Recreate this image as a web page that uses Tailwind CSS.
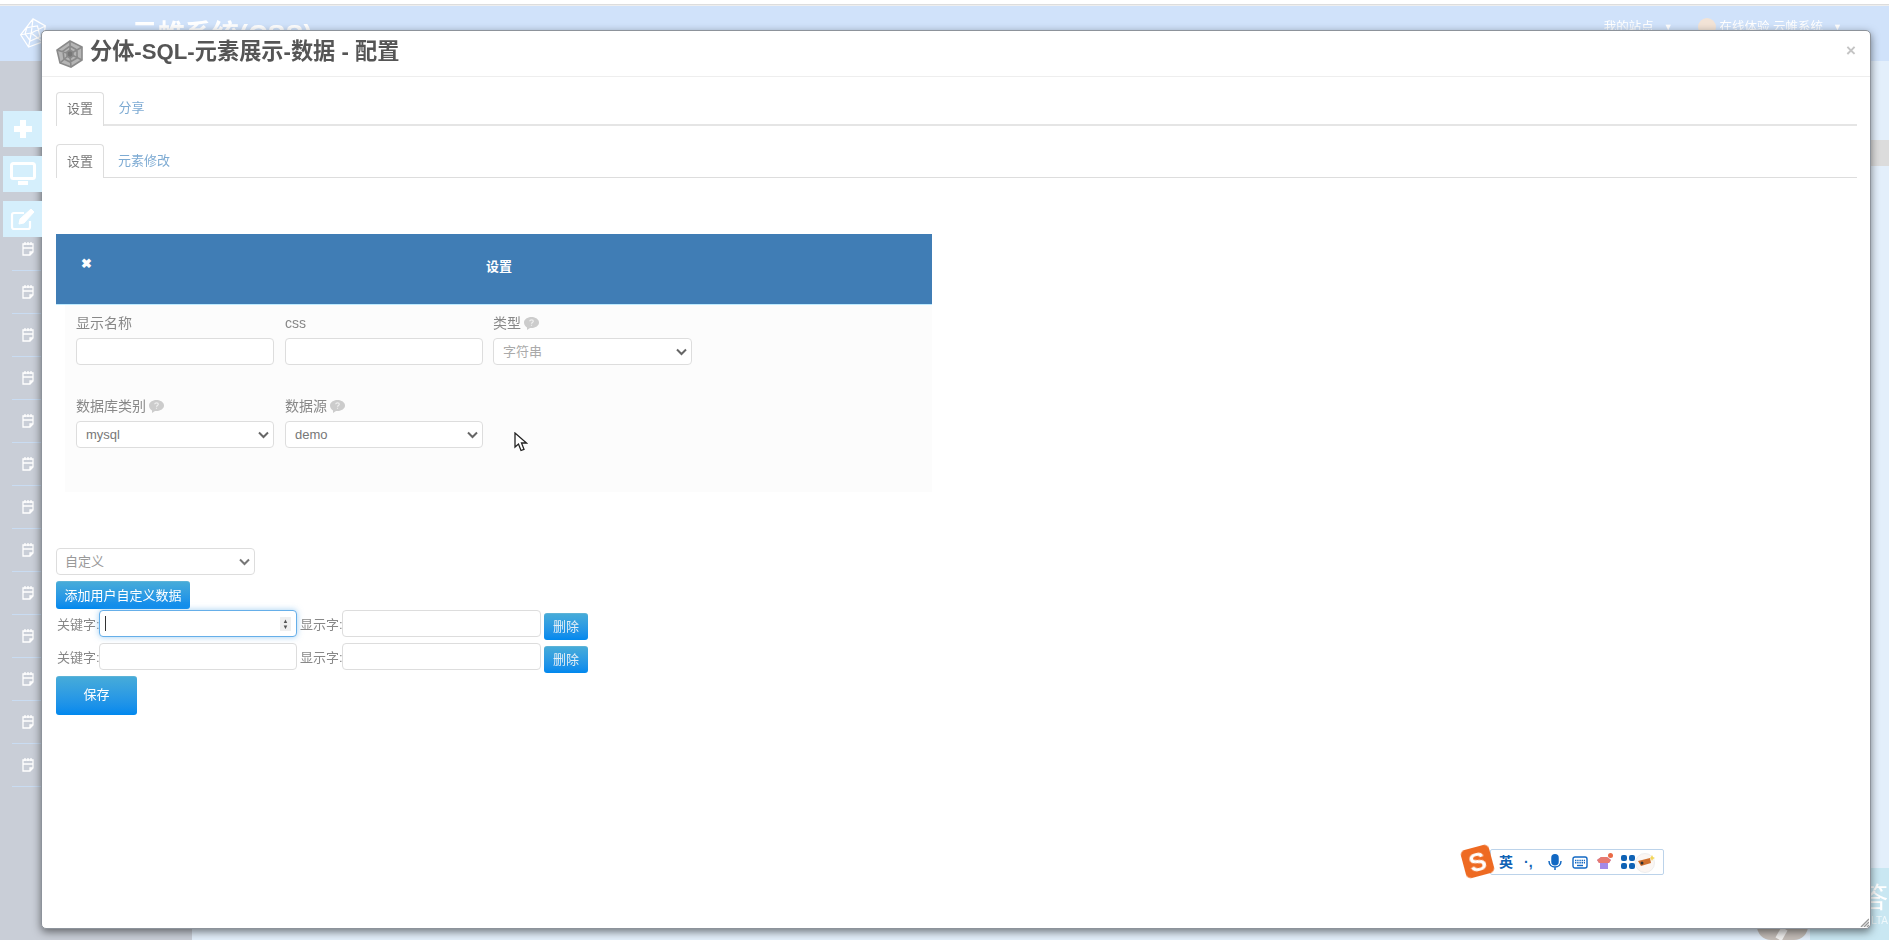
<!DOCTYPE html>
<html lang="zh">
  <head>
    <meta charset="UTF-8" />
    <title>分体-SQL-元素展示-数据 - 配置</title>
    <script src="https://cdn.jsdelivr.net/npm/@tailwindcss/browser@4"></script>
  </head>
  <body class="relative h-[940px] w-[1889px] overflow-hidden bg-white font-['Liberation_Sans','Noto_Sans_CJK_SC',sans-serif] text-[#777]">
    <div class="relative h-full w-full blur-[0.5px]">
      <!-- page behind the dialog -->
      <div class="h-[5px] border-b border-[#ddd] bg-white"></div>
      <header class="flex h-[56px] items-start border-t border-[#eee] bg-[#d0e2fa] text-white">
        <div class="w-[131px] pl-[18px] pt-[10px]">
          <svg width="30" height="34" viewBox="0 0 34 36" fill="none" stroke="#fff" stroke-width="1.4"><path d="M17 2 31 10 28 28 12 34 3 20Z M17 2 15 18 31 10 M15 18 28 28 M15 18 12 34 M15 18 3 20 M10 12 22 10 25 22 14 27 8 19Z" /></svg>
        </div>
        <div class="pt-[16px] text-[27px] font-bold leading-none">云帷系统(CSS)</div>
        <div class="ml-auto flex items-center pr-[47px] pt-[12px] text-[12.5px]">
          <span>我的站点</span><span class="ml-[10px] mr-[25px] text-[9px]">▼</span>
          <span class="mr-[4px] size-[18px] rounded-full bg-[#f2e3d6]"></span>
          <span>在线体验 云帷系统</span><span class="ml-[10px] text-[9px]">▼</span>
        </div>
      </header>

      <div class="flex h-[879px]">
        <aside class="w-[192px] bg-[#c9ced7]">
          <div class="relative z-10 flex flex-col gap-[9px] pl-[3px] pt-[50px]">
            <div class="flex h-[36px] w-[39px] items-center justify-center bg-[#d5effc]">
              <svg width="20" height="20" viewBox="0 0 20 20" fill="#fff"><path d="M7 1h6v6h6v6h-6v6H7v-6H1V7h6z" /></svg>
            </div>
            <div class="flex h-[36px] w-[39px] items-center justify-center bg-[#d5effc]">
              <svg width="26" height="24" viewBox="0 0 26 24" fill="none"><rect x="1.500" y="1.500" width="23" height="15" rx="2" stroke="#fff" stroke-width="3" /><path d="M8 21h10" stroke="#fff" stroke-width="4" /></svg>
            </div>
            <div class="flex h-[36px] w-[39px] items-center justify-center bg-[#d5effc]">
              <svg width="26" height="24" viewBox="0 0 26 24" fill="none" stroke="#fff" stroke-width="2.200"><path d="M20 14v6a2 2 0 0 1-2 2H4a2 2 0 0 1-2-2V8a2 2 0 0 1 2-2h10" /><path d="M9 17l1-5L21 2l3 3-10 11z" fill="#fff" stroke-width="1" /></svg>
            </div>
          </div>
          <div id="side-list" class="-mt-[9px] pl-[12px]"></div>
        </aside>
        <main class="flex-1 bg-[#e3effb]"></main>
      </div>
      <div class="absolute right-0 top-[140px] h-[26px] w-[18px] bg-[#dcdcdc]"></div>

      <!-- chat widget in the corner, mostly under the dialog -->
      <div class="absolute left-[1810px] top-[868px] flex h-[72px] w-[79px] flex-col items-end overflow-hidden bg-[#c9e7f2] pr-[1px] pt-[17px] text-white">
        <span class="text-[28px] leading-none">答</span>
        <span class="mt-[3px] text-[10px] leading-none text-white/70">ONSULTA</span>
      </div>
      <div class="absolute left-[1757px] top-[920px] h-[20px] w-[51px] rounded-b-[14px] bg-[#c4bdb8]">
        <div class="ml-[21px] mt-[8px] h-[12px] w-[7px] rotate-[30deg] bg-white/80"></div>
      </div>

      <!-- dialog -->
      <div class="absolute left-[41px] top-[30px] flex h-[899px] w-[1830px] flex-col rounded-[5px] border border-[#8d939b] bg-white shadow-[0_3px_9px_rgba(0,0,0,0.5)]">
        <div class="flex h-[46px] shrink-0 items-center border-b border-[#eee] pl-[13px] pr-[14px]">
          <svg width="30" height="30" viewBox="0 0 30 30" fill="none" stroke="#8a8a8a" stroke-width="1.6"><path d="M15 2 27 8 27 21 16 28 5 24 2 11Z" fill="#b5b5b5" /><path d="M15 7 22 11 22 19 15 23 9 20 8 12Z M15 15 15 2 M15 15 27 8 M15 15 27 21 M15 15 16 28 M15 15 5 24 M15 15 2 11" /><path d="M15 11 18 13 18 17 15 19 12 17 12 13Z" fill="#777" /></svg>
          <h4 class="ml-[5px] mt-[-2px] text-[22.2px] font-bold leading-none text-[#555]">分体-SQL-元素展示-数据 - 配置</h4>
          <span class="ml-auto mt-[-6px] text-[17px] font-bold leading-none text-[#c4c4c4]">×</span>
        </div>

        <div class="flex min-h-0 flex-1 flex-col pl-[14px] pr-[13px] pt-[15px]">
          <div class="flex h-[34px] shrink-0 border-b-2 border-[#e5e5e5] text-[13px]">
            <span class="-mb-[2px] flex h-[34px] w-[48px] items-center justify-center rounded-t-[4px] border border-b-0 border-[#ddd] bg-white pb-[2px] text-[#777]">设置</span>
            <span class="flex h-[32px] w-[55px] items-center justify-center text-[#7eabd3]">分享</span>
          </div>
          <div class="mt-[18px] flex h-[34px] shrink-0 border-b border-[#ddd] text-[13px]">
            <span class="-mb-[1px] flex h-[34px] w-[48px] items-center justify-center rounded-t-[4px] border border-b-0 border-[#ddd] bg-white text-[#777]">设置</span>
            <span class="flex h-[33px] w-[80px] items-center justify-center text-[#7eabd3]">元素修改</span>
          </div>

          <section class="mt-[56px] w-[876px] shrink-0">
            <div class="relative flex h-[71px] items-center justify-center border-b border-[#bdeaff] bg-[#407db5] pb-[4px] pl-[10px] text-[13px] font-bold text-white">
              <span class="absolute left-[25px] top-[23px] text-[13px] font-bold leading-none">✖</span>
              设置
            </div>
            <div class="ml-[9px] h-[187px] bg-[#fcfcfc] pl-[11px] pt-[8px] text-[#888]">
              <div class="flex gap-[10px]">
                <label class="mr-[1px] flex w-[198px] flex-col">
                  <span class="flex h-[25px] items-center pb-[4px] text-[14px]">显示名称</span>
                  <input class="h-[27px] rounded-[4px] border border-[#ddd] bg-white" />
                </label>
                <label class="flex w-[198px] flex-col">
                  <span class="flex h-[25px] items-center pb-[4px] text-[14px]">css</span>
                  <input class="h-[27px] rounded-[4px] border border-[#ddd] bg-white" />
                </label>
                <label class="flex w-[199px] flex-col">
                  <span class="flex h-[25px] items-center gap-[3px] pb-[4px] text-[14px]">类型
                    <svg width="15" height="13" viewBox="0 0 15 13"><path d="M7.500 0C11.600 0 15 2.400 15 5.500S11.600 11 7.500 11H6L3 13V10.400C1.200 9.400 0 7.600 0 5.500 0 2.400 3.400 0 7.500 0Z" fill="#ccc" /><path d="M5.700 4.200C5.900 2.500 9.300 2.500 9.300 4.300 9.300 5.500 7.500 5.500 7.500 6.800M7.500 7.800V8.800" fill="none" stroke="#eee" stroke-width="1.200" /></svg>
                  </span>
                  <span class="flex h-[27px] items-center justify-between rounded-[4px] border border-[#ddd] bg-white pl-[9px] pr-[4px] text-[13px] text-[#aaa]">字符串
                    <svg width="11" height="8" viewBox="0 0 11 8" fill="none" stroke="#666" stroke-width="2"><path d="M1 1.500 5.500 6 10 1.500" /></svg>
                  </span>
                </label>
              </div>
              <div class="mt-[31px] flex gap-[11px]">
                <label class="flex w-[198px] flex-col">
                  <span class="flex h-[25px] items-center gap-[3px] pb-[5px] text-[14px]">数据库类别
                    <svg width="15" height="13" viewBox="0 0 15 13"><path d="M7.500 0C11.600 0 15 2.400 15 5.500S11.600 11 7.500 11H6L3 13V10.400C1.200 9.400 0 7.600 0 5.500 0 2.400 3.400 0 7.500 0Z" fill="#ccc" /><path d="M5.700 4.200C5.900 2.500 9.300 2.500 9.300 4.300 9.300 5.500 7.500 5.500 7.500 6.800M7.500 7.800V8.800" fill="none" stroke="#eee" stroke-width="1.200" /></svg>
                  </span>
                  <span class="flex h-[27px] items-center justify-between rounded-[4px] border border-[#ddd] bg-white pl-[9px] pr-[4px] text-[13px] text-[#777]">mysql
                    <svg width="11" height="8" viewBox="0 0 11 8" fill="none" stroke="#666" stroke-width="2"><path d="M1 1.500 5.500 6 10 1.500" /></svg>
                  </span>
                </label>
                <label class="flex w-[198px] flex-col">
                  <span class="flex h-[25px] items-center gap-[3px] pb-[5px] text-[14px]">数据源
                    <svg width="15" height="13" viewBox="0 0 15 13"><path d="M7.500 0C11.600 0 15 2.400 15 5.500S11.600 11 7.500 11H6L3 13V10.400C1.200 9.400 0 7.600 0 5.500 0 2.400 3.400 0 7.500 0Z" fill="#ccc" /><path d="M5.700 4.200C5.900 2.500 9.300 2.500 9.300 4.300 9.300 5.500 7.500 5.500 7.500 6.800M7.500 7.800V8.800" fill="none" stroke="#eee" stroke-width="1.200" /></svg>
                  </span>
                  <span class="flex h-[27px] items-center justify-between rounded-[4px] border border-[#ddd] bg-white pl-[9px] pr-[4px] text-[13px] text-[#777]">demo
                    <svg width="11" height="8" viewBox="0 0 11 8" fill="none" stroke="#666" stroke-width="2"><path d="M1 1.500 5.500 6 10 1.500" /></svg>
                  </span>
                </label>
              </div>
            </div>
          </section>

          <div class="mt-[56px] flex h-[27px] w-[199px] shrink-0 items-center justify-between rounded-[4px] border border-[#ddd] bg-white pl-[8px] pr-[4px] text-[13px] text-[#999]">自定义
            <svg width="11" height="8" viewBox="0 0 11 8" fill="none" stroke="#777" stroke-width="2"><path d="M1 1.500 5.500 6 10 1.500" /></svg>
          </div>
          <button class="mt-[6px] h-[28px] w-[134px] shrink-0 rounded-[3px] border-t border-[#5cb3d8] bg-linear-to-b from-[#46abd9] to-[#0088ee] text-[13px] text-white">添加用户自定义数据</button>
          <div class="flex h-[33px] shrink-0 items-start text-[13px]">
            <span class="w-[43px] whitespace-nowrap pl-[1px] pt-[6px] text-[#888]">关键字:</span>
            <span class="mt-[1px] flex h-[27px] w-[198px] items-center justify-between rounded-[4px] border border-[#66afe9] bg-white pl-[5px] pr-[5px] shadow-[0_0_6px_rgba(102,175,233,0.6)]">
              <span class="h-[15px] w-px bg-[#333]"></span>
              <span class="flex h-[14px] w-[11px] flex-col items-center justify-center bg-[#efefef] text-[6px] leading-[6px] text-[#555]"><span>▲</span><span>▼</span></span>
            </span>
            <span class="w-[45px] whitespace-nowrap pl-[3px] pt-[6px] text-[#888]">显示字:</span>
            <input class="mt-[1px] h-[27px] w-[199px] rounded-[4px] border border-[#ddd] bg-white" />
            <button class="ml-[3px] mt-[4px] h-[27px] w-[44px] rounded-[3px] border-t border-[#5cb3d8] bg-linear-to-b from-[#46abd9] to-[#0088ee] text-[13px] text-[#e4eef6]">删除</button>
          </div>
          <div class="flex h-[33px] shrink-0 items-start text-[13px]">
            <span class="w-[43px] whitespace-nowrap pl-[1px] pt-[6px] text-[#888]">关键字:</span>
            <input class="mt-[1px] h-[27px] w-[198px] rounded-[4px] border border-[#ddd] bg-white" />
            <span class="w-[45px] whitespace-nowrap pl-[3px] pt-[6px] text-[#888]">显示字:</span>
            <input class="mt-[1px] h-[27px] w-[199px] rounded-[4px] border border-[#ddd] bg-white" />
            <button class="ml-[3px] mt-[4px] h-[27px] w-[44px] rounded-[3px] border-t border-[#5cb3d8] bg-linear-to-b from-[#46abd9] to-[#0088ee] text-[13px] text-[#e4eef6]">删除</button>
          </div>
          <button class="mt-[1px] h-[39px] w-[81px] shrink-0 rounded-[3px] border-t border-[#5cb3d8] bg-linear-to-b from-[#46abd9] to-[#0088ee] pb-[2px] text-[13px] text-white">保存</button>
        </div>
        <svg class="absolute bottom-[1px] right-[1px]" width="9" height="9" viewBox="0 0 9 9" stroke="#999" stroke-width="1.400"><path d="M9 1 1 9 M9 4 4 9 M9 7 7 9" /></svg>
      </div>

      <!-- mouse pointer -->
      <svg class="absolute left-[514px] top-[432px]" width="14" height="20" viewBox="0 0 14 20" fill="#fff" stroke="#222" stroke-width="1.300"><path d="M1 1V15L4.500 12L7 18.500L10 17.300L7.500 11H12.500Z" /></svg>

      <!-- input method toolbar -->
      <div class="absolute left-[1490px] top-[849px] flex h-[26px] w-[174px] items-center gap-[7px] rounded-[2px] border border-[#bcd3ea] bg-white pl-[8px] text-[#0f62b5]">
        <span class="text-[14px] font-bold leading-none">英</span>
        <span class="ml-[4px] w-[17px] text-[14px] font-bold leading-none">·,</span>
        <svg width="14" height="17" viewBox="0 0 14 17" fill="none" stroke="#1268c3" stroke-width="1.500"><rect x="4" y="0.800" width="6" height="10" rx="3" fill="#1268c3" /><path d="M1 7c0 8 12 8 12 0 M7 13v3" /></svg>
        <svg class="ml-[3px]" width="16" height="13" viewBox="0 0 16 13" fill="none" stroke="#1268c3"><rect x="1" y="1" width="14" height="11" rx="2" stroke-width="1.400" /><path d="M3 4.500h10 M3 6.800h10" stroke-width="1.400" stroke-dasharray="1.400 0.800" /><path d="M5 9.500h6" stroke-width="1.400" /></svg>
        <svg class="ml-[1px]" width="18" height="18" viewBox="0 0 18 18"><path d="M1 7 5 4h6l4 3-2 3-1-.500V16H4V9.500L3 10Z" fill="#a48ae8" /><path d="M1 7 5 4h6l4 3-2 3H3Z" fill="#e87a70" /><circle cx="14.500" cy="2.500" r="2.500" fill="#ea6a45" /></svg>
        <svg width="14" height="14" viewBox="0 0 14 14" fill="#0f62b5"><rect width="6" height="6" rx="2" /><rect x="8" width="6" height="6" rx="2" /><rect y="8" width="6" height="6" rx="2" /><rect x="8" y="8" width="6" height="6" rx="2" /></svg>
        <svg class="absolute left-[144px] top-[2px]" width="21" height="21" viewBox="0 0 21 21"><circle cx="10" cy="11" r="9.500" fill="#fbf6f3" stroke="#eee" /><path d="M3 9 15 6 16 11 6 14Z" fill="#d0702e" /><circle cx="7" cy="11" r="1.500" fill="#333" /><path d="M17 3l1 2 2 1-2 1-1 2-1-2-1-1 1-1Z" fill="#f3d65a" /></svg>
      </div>
      <div class="absolute left-[1463px] top-[847px] flex size-[29px] rotate-[-15deg] items-center justify-center rounded-[5px] bg-[#ee6a22] text-[26px] font-bold leading-none text-white">S</div>
    </div>

    <script>
      // sidebar rows, all the same
      const sideList = document.getElementById('side-list');
      for (let i = 0; i < 13; i++) {
        sideList.innerHTML += `<div class="flex h-[43px] items-center border-b border-[#c9dcf2] pl-[10px]"><svg width="12" height="14" viewBox="0 0 12 14" fill="none" stroke="#fff" stroke-width="1.300"><path d="M1 2h10v8l-3 3H1z M3 0v3 M6 0v3 M9 0v3 M1 6h10 M8 13v-3h3" /></svg></div>`;
      }
    </script>
  </body>
</html>
